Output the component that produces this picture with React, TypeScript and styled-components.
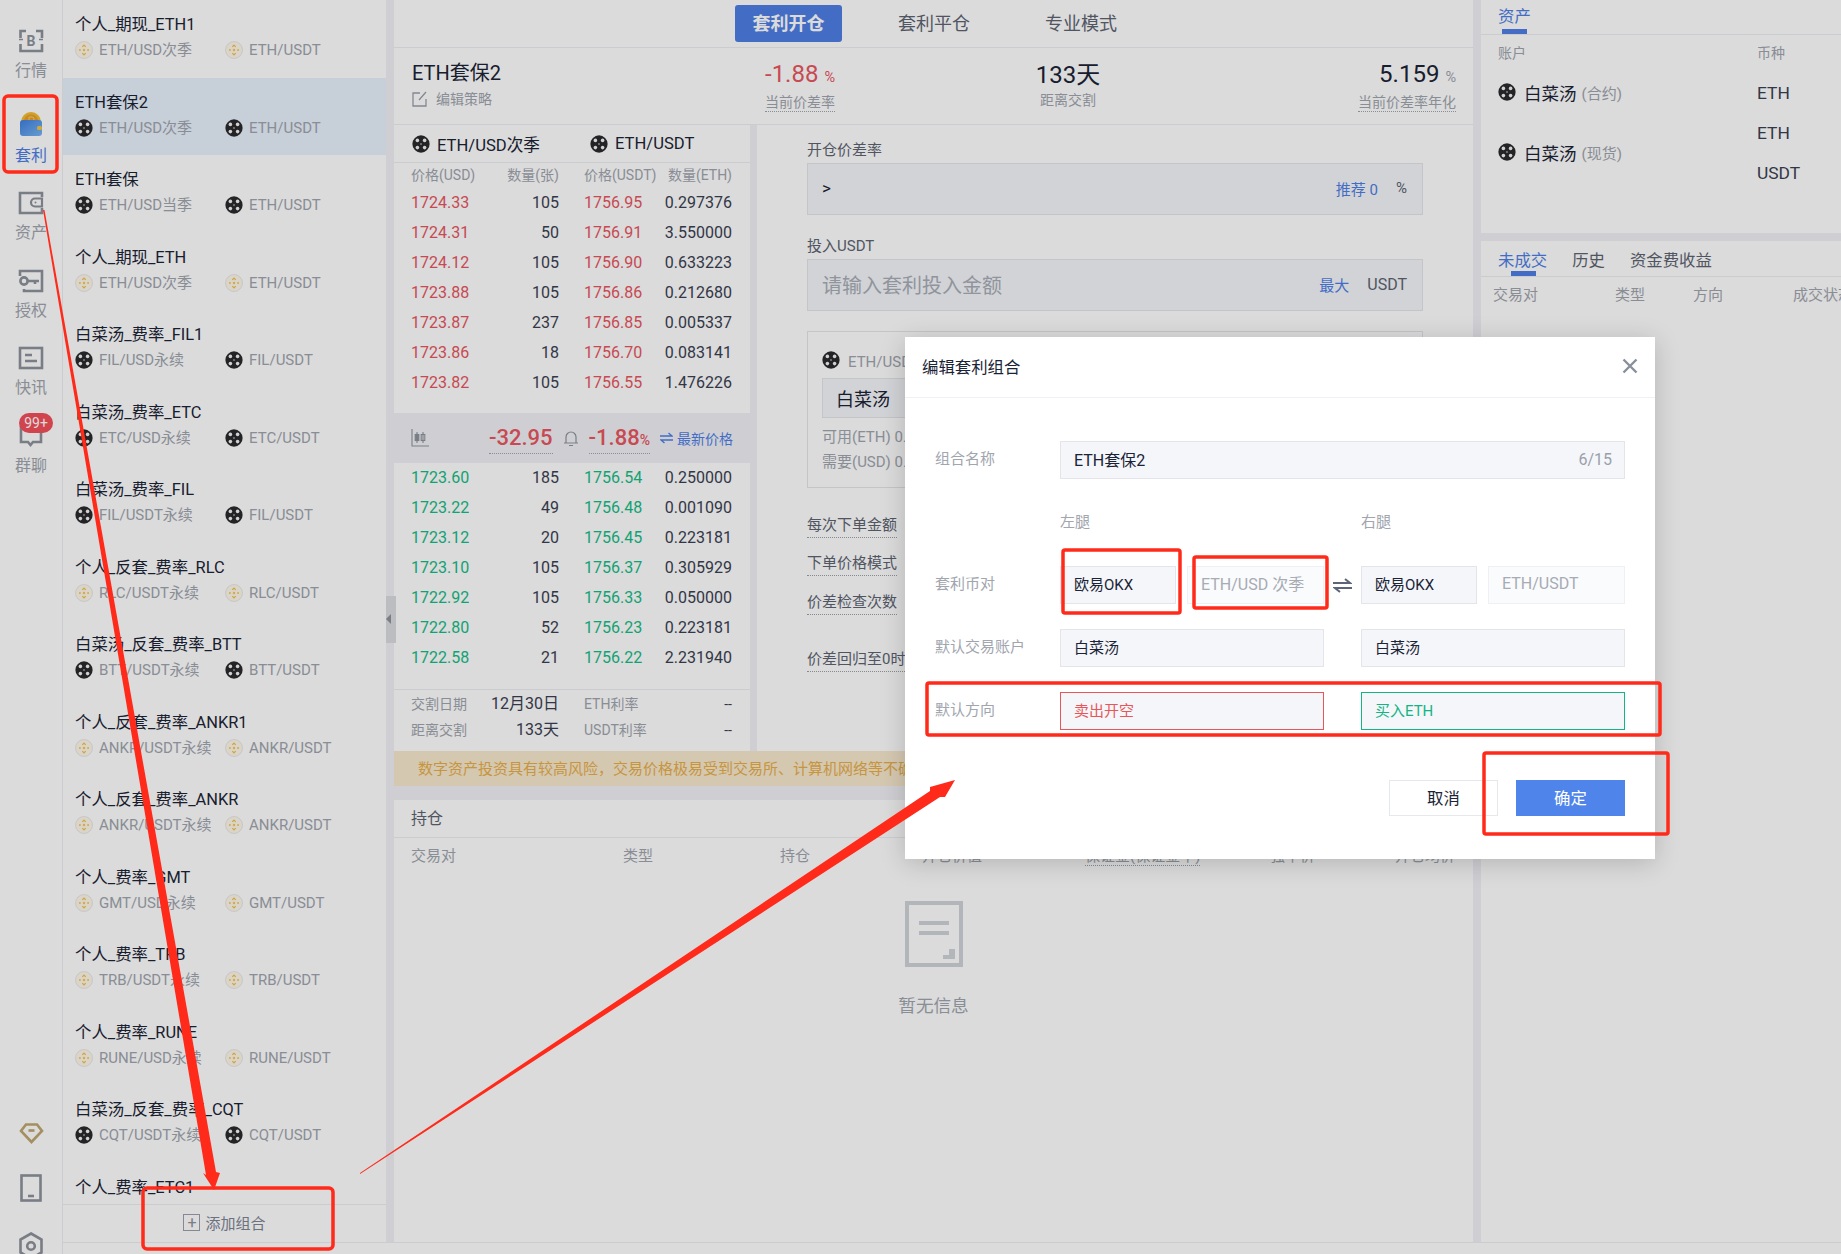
import React from 'react'
import styled, { createGlobalStyle } from 'styled-components'

const FONT = `Roboto, "Noto Sans CJK SC", "Noto Sans", sans-serif`
const BLUE = '#4f7fe6'
const RED = '#e9565f'
const GREEN = '#14bd87'
const INK = '#1b2436'
const NUM = '#3a4152'
const GREY = '#a0a5ae'

const GlobalStyle = createGlobalStyle`
  html, body { margin: 0; padding: 0; }
  body { font-family: ${FONT}; background: #fff; color: ${INK}; }
  * { box-sizing: border-box; }
`

type CoinKind = 'ok' | 'bn'

const Coin = ({ kind, size = 18 }: { kind: CoinKind; size?: number }) =>
  kind === 'ok' ? (
    <svg width={size} height={size} viewBox="0 0 20 20">
      <circle cx="10" cy="10" r="9.6" fill="#2b2b2e" />
      <circle cx="6" cy="6" r="2" fill="#f4f4f4" />
      <circle cx="14" cy="6" r="2" fill="#f4f4f4" />
      <circle cx="6" cy="14" r="2" fill="#f4f4f4" />
      <circle cx="14" cy="14" r="2" fill="#f4f4f4" />
      <circle cx="10" cy="10" r="0.8" fill="#f4f4f4" />
    </svg>
  ) : (
    <svg width={size} height={size} viewBox="0 0 20 20">
      <circle cx="10" cy="10" r="9.4" fill="#fff9ea" stroke="#e4e4e4" />
      <path
        d="M10 3.6l2.4 2.4-1 1L10 5.6 8.6 7l-1-1zM5.6 8.6l1 1.4-1 1.4-1.4-1.4zM14.4 8.6l1.4 1.4-1.4 1.4-1-1.4zM10 8.4l1.6 1.6-1.6 1.6L8.4 10zM7.6 14l1-1 1.4 1.4 1.4-1.4 1 1-2.4 2.4z"
        fill="#efc14f"
      />
    </svg>
  )

const strokeIcon = { fill: 'none', stroke: '#8d939c', strokeWidth: 2.6 }

const MarketIcon = () => (
  <svg width="26" height="26" viewBox="0 0 26 26" {...strokeIcon}>
    <path d="M8 3H2.5v7M2.5 16v7H24v-7M24 10V3H18" />
    <path d="M1 11.5h4M21 11.5h4" strokeWidth="1.6" />
    <text x="13" y="18" textAnchor="middle" fontSize="14" fontWeight="700" fill="#8d939c" stroke="none" fontFamily="Roboto, sans-serif">
      B
    </text>
  </svg>
)

const ArbIcon = () => (
  <svg width="24" height="24" viewBox="0 0 24 24">
    <defs>
      <linearGradient id="walletFill" x1="0" y1="0" x2="1" y2="1">
        <stop offset="0" stopColor="#3f7fe0" />
        <stop offset="1" stopColor="#78b6f2" />
      </linearGradient>
    </defs>
    <circle cx="12" cy="10" r="10" fill="#f4bd2c" />
    <circle cx="12" cy="10" r="7.4" fill="#ea9f2f" />
    <path d="M10 5v8M10 5h3a2 2 0 010 4h-3M10 9h3.5a2 2 0 010 4H10" fill="none" stroke="#f8d465" strokeWidth="1" />
    <rect x="1" y="8" width="22" height="16" rx="3" fill="url(#walletFill)" />
    <rect x="18" y="14" width="5" height="4" rx="1.5" fill="#f2c54a" />
  </svg>
)

const WalletIcon = () => (
  <svg width="26" height="24" viewBox="0 0 26 24" {...strokeIcon}>
    <path d="M24 6V2H2v20h22v-5" />
    <path d="M24 7.5h-7a4 4 0 000 8h7z" strokeWidth="2.2" />
    <circle cx="17.5" cy="11.5" r="1" fill="#8d939c" stroke="none" />
  </svg>
)

const KeyIcon = () => (
  <svg width="26" height="24" viewBox="0 0 26 24" {...strokeIcon}>
    <path d="M2 7V2h22v20H6v-2" />
    <circle cx="6" cy="12" r="3.6" />
    <path d="M10 12h11M17 12v3" />
  </svg>
)

const NewsIcon = () => (
  <svg width="26" height="24" viewBox="0 0 26 24" {...strokeIcon}>
    <rect x="2" y="2" width="22" height="20" />
    <path d="M7 9h7M7 15h12" />
  </svg>
)

const ChatIcon = () => (
  <svg width="26" height="24" viewBox="0 0 26 24" {...strokeIcon}>
    <path d="M3 3h20v15H15l-2.5 3-2.5-3H3z" />
  </svg>
)

const DiamondIcon = () => (
  <svg width="25" height="21" viewBox="0 0 25 21" fill="none" stroke="#bfa76f" strokeWidth="2.6">
    <path d="M7 1.5h11l5 6.5-10.5 11L2 8z" />
    <path d="M9.5 7.5h6" />
  </svg>
)

const TabletIcon = () => (
  <svg width="22" height="28" viewBox="0 0 22 28" {...strokeIcon}>
    <rect x="1.5" y="1.5" width="19" height="25" />
    <path d="M8 22h6" />
  </svg>
)

const GearIcon = () => (
  <svg width="24" height="28" viewBox="0 0 24 28" {...strokeIcon}>
    <path d="M12 1.5l10.5 6v13L12 26.5 1.5 20.5v-13z" />
    <circle cx="12" cy="14" r="3.8" />
  </svg>
)

const NAV: { label: string; icon: React.ReactNode; active?: boolean; badge?: string }[] = [
  { label: '行情', icon: <MarketIcon /> },
  { label: '套利', icon: <ArbIcon />, active: true },
  { label: '资产', icon: <WalletIcon /> },
  { label: '授权', icon: <KeyIcon /> },
  { label: '快讯', icon: <NewsIcon /> },
  { label: '群聊', icon: <ChatIcon />, badge: '99+' },
]

const COMBOS: { name: string; kind: CoinKind; left?: string; right?: string; active?: boolean }[] = [
  { name: '个人_期现_ETH1', kind: 'bn', left: 'ETH/USD次季', right: 'ETH/USDT' },
  { name: 'ETH套保2', kind: 'ok', left: 'ETH/USD次季', right: 'ETH/USDT', active: true },
  { name: 'ETH套保', kind: 'ok', left: 'ETH/USD当季', right: 'ETH/USDT' },
  { name: '个人_期现_ETH', kind: 'bn', left: 'ETH/USD次季', right: 'ETH/USDT' },
  { name: '白菜汤_费率_FIL1', kind: 'ok', left: 'FIL/USD永续', right: 'FIL/USDT' },
  { name: '白菜汤_费率_ETC', kind: 'ok', left: 'ETC/USD永续', right: 'ETC/USDT' },
  { name: '白菜汤_费率_FIL', kind: 'ok', left: 'FIL/USDT永续', right: 'FIL/USDT' },
  { name: '个人_反套_费率_RLC', kind: 'bn', left: 'RLC/USDT永续', right: 'RLC/USDT' },
  { name: '白菜汤_反套_费率_BTT', kind: 'ok', left: 'BTT/USDT永续', right: 'BTT/USDT' },
  { name: '个人_反套_费率_ANKR1', kind: 'bn', left: 'ANKR/USDT永续', right: 'ANKR/USDT' },
  { name: '个人_反套_费率_ANKR', kind: 'bn', left: 'ANKR/USDT永续', right: 'ANKR/USDT' },
  { name: '个人_费率_GMT', kind: 'bn', left: 'GMT/USD永续', right: 'GMT/USDT' },
  { name: '个人_费率_TRB', kind: 'bn', left: 'TRB/USDT永续', right: 'TRB/USDT' },
  { name: '个人_费率_RUNE', kind: 'bn', left: 'RUNE/USD永续', right: 'RUNE/USDT' },
  { name: '白菜汤_反套_费率_CQT', kind: 'ok', left: 'CQT/USDT永续', right: 'CQT/USDT' },
  { name: '个人_费率_ETC1', kind: 'bn' },
]

const ASKS = [
  ['1724.33', '105', '1756.95', '0.297376'],
  ['1724.31', '50', '1756.91', '3.550000'],
  ['1724.12', '105', '1756.90', '0.633223'],
  ['1723.88', '105', '1756.86', '0.212680'],
  ['1723.87', '237', '1756.85', '0.005337'],
  ['1723.86', '18', '1756.70', '0.083141'],
  ['1723.82', '105', '1756.55', '1.476226'],
]

const BIDS = [
  ['1723.60', '185', '1756.54', '0.250000'],
  ['1723.22', '49', '1756.48', '0.001090'],
  ['1723.12', '20', '1756.45', '0.223181'],
  ['1723.10', '105', '1756.37', '0.305929'],
  ['1722.92', '105', '1756.33', '0.050000'],
  ['1722.80', '52', '1756.23', '0.223181'],
  ['1722.58', '21', '1756.22', '2.231940'],
]

const POSITION_HEADS = [
  { label: '交易对', width: 212 },
  { label: '类型', width: 157 },
  { label: '持仓', width: 142 },
  { label: '开仓价值', width: 163 },
  { label: '保证金(保证金率)', width: 185, dotted: true },
  { label: '强平价', width: 125 },
  { label: '开仓均价', width: 66 },
]

const HINTS = [
  { label: '每次下单金额', top: 26 },
  { label: '下单价格模式', top: 14 },
  { label: '价差检查次数', top: 15 },
  { label: '价差回归至0时', top: 33 },
]

export default function App() {
  return (
    <Page>
      <GlobalStyle />
      <Rail>
        <Nav>
          {NAV.map((item) => (
            <NavItem key={item.label} $active={item.active}>
              <NavIcon $active={item.active}>
                {item.icon}
                {item.badge && <Badge>{item.badge}</Badge>}
              </NavIcon>
              {item.label}
            </NavItem>
          ))}
        </Nav>
        <RailBottom>
          <DiamondIcon />
          <TabletIcon />
          <GearIcon />
        </RailBottom>
      </Rail>
      <Body>
        <Columns>
          <ListColumn>
            <ComboList>
              {COMBOS.map((c) => (
                <ComboRow key={c.name} $active={c.active}>
                  <ComboName>{c.name}</ComboName>
                  {c.left && (
                    <ComboPairs>
                      <ComboPair>
                        <Coin kind={c.kind} />
                        {c.left}
                      </ComboPair>
                      <ComboPair>
                        <Coin kind={c.kind} />
                        {c.right}
                      </ComboPair>
                    </ComboPairs>
                  )}
                </ComboRow>
              ))}
            </ComboList>
            <AddBar>
              <PlusBox>+</PlusBox>
              添加组合
            </AddBar>
          </ListColumn>
          <Collapse />
          <Main>
            <TabBar>
              <MainTab $active>套利开仓</MainTab>
              <MainTab>套利平仓</MainTab>
              <MainTab>专业模式</MainTab>
            </TabBar>
            <Summary>
              <div>
                <SummaryName>ETH套保2</SummaryName>
                <EditLink>
                  <svg width="16" height="16" viewBox="0 0 16 16" fill="none" stroke="#9aa0a9" strokeWidth="1.3">
                    <path d="M8 2H1v13h13V8M7 9l7-8" />
                  </svg>
                  编辑策略
                </EditLink>
              </div>
              <Stat>
                <StatValue $color={RED}>
                  -1.88<StatUnit $color={RED}>%</StatUnit>
                </StatValue>
                <StatLabel $dotted>当前价差率</StatLabel>
              </Stat>
              <Stat $align="center">
                <StatValue>133天</StatValue>
                <StatLabel>距离交割</StatLabel>
              </Stat>
              <Stat $align="flex-end">
                <StatValue>
                  5.159<StatUnit>%</StatUnit>
                </StatValue>
                <StatLabel $dotted>当前价差率年化</StatLabel>
              </Stat>
            </Summary>
            <TradeRow>
              <Book>
                <BookPairs>
                  <BookPair>
                    <Coin kind="ok" />
                    ETH/USD次季
                  </BookPair>
                  <BookPair>
                    <Coin kind="ok" />
                    ETH/USDT
                  </BookPair>
                </BookPairs>
                <BookHead>
                  <span>价格(USD)</span>
                  <span>数量(张)</span>
                  <span>价格(USDT)</span>
                  <span>数量(ETH)</span>
                </BookHead>
                <Asks>
                  {ASKS.map((r) => (
                    <BookRow key={r[0]} $color={RED}>
                      {r.map((v, i) => (
                        <span key={i}>{v}</span>
                      ))}
                    </BookRow>
                  ))}
                </Asks>
                <SpreadBand>
                  <svg width="18" height="18" viewBox="0 0 18 18" fill="none" stroke="#8d939c" strokeWidth="1.1">
                    <path d="M1 0v17h17M6 3v11M12 3v11" />
                    <rect x="4.2" y="5.5" width="3.6" height="6" fill="#8d939c" />
                    <rect x="10.2" y="5.5" width="3.6" height="6" />
                  </svg>
                  <SpreadValues>
                    <SpreadValue>-32.95</SpreadValue>
                    <svg width="18" height="18" viewBox="0 0 18 18" fill="none" stroke="#8d939c" strokeWidth="1.2">
                      <path d="M2 14h14M4 14V8a5 5 0 0110 0v6M7 16.5h4" />
                    </svg>
                    <SpreadValue>
                      -1.88<small>%</small>
                    </SpreadValue>
                  </SpreadValues>
                  <LatestPrice>
                    <svg width="13" height="12" viewBox="0 0 13 12" fill="none" stroke={BLUE} strokeWidth="1.4">
                      <path d="M0 4h12L8.5 1M13 8H1l3.5 3" />
                    </svg>
                    最新价格
                  </LatestPrice>
                </SpreadBand>
                <Bids>
                  {BIDS.map((r) => (
                    <BookRow key={r[0]} $color={GREEN}>
                      {r.map((v, i) => (
                        <span key={i}>{v}</span>
                      ))}
                    </BookRow>
                  ))}
                </Bids>
                <BookFooter>
                  <FooterRow>
                    <span>交割日期</span>
                    <span>12月30日</span>
                    <span>ETH利率</span>
                    <span>--</span>
                  </FooterRow>
                  <FooterRow>
                    <span>距离交割</span>
                    <span>133天</span>
                    <span>USDT利率</span>
                    <span>--</span>
                  </FooterRow>
                </BookFooter>
              </Book>
              <FormColumn>
                <FormLabel>开仓价差率</FormLabel>
                <BigInput>
                  <InputPrefix>&gt;</InputPrefix>
                  <InputAction>推荐 0</InputAction>
                  <InputUnit $size={15}>%</InputUnit>
                </BigInput>
                <FormLabel $top={21}>投入USDT</FormLabel>
                <BigInput>
                  <Placeholder>请输入套利投入金额</Placeholder>
                  <InputAction>最大</InputAction>
                  <InputUnit $size={16}>USDT</InputUnit>
                </BigInput>
                <LegBox>
                  <LegPair>
                    <Coin kind="ok" />
                    ETH/USD次季
                  </LegPair>
                  <LegSelect>白菜汤</LegSelect>
                  <LegInfo>可用(ETH) 0.00</LegInfo>
                  <LegInfo>需要(USD) 0.00</LegInfo>
                </LegBox>
                {HINTS.map((h) => (
                  <HintLabel key={h.label} $top={h.top}>
                    {h.label}
                  </HintLabel>
                ))}
              </FormColumn>
            </TradeRow>
            <RiskBanner>
              数字资产投资具有较高风险，交易价格极易受到交易所、计算机网络等不确定因素影响，请谨慎参与
            </RiskBanner>
            <Positions>
              <PositionsTitle>持仓</PositionsTitle>
              <PositionsHead>
                {POSITION_HEADS.map((h) => (
                  <PositionCell key={h.label} $width={h.width} $dotted={h.dotted}>
                    <span>{h.label}</span>
                  </PositionCell>
                ))}
              </PositionsHead>
              <Empty>
                <svg width="58" height="66" viewBox="0 0 58 66" fill="none" stroke="#d0d4da" strokeWidth="4">
                  <path d="M2 2h54v62H2z" />
                  <path d="M14 22h30M14 32h30" strokeWidth="4" />
                  <path d="M38 54h6v-6h6v10H38z" fill="#d0d4da" stroke="none" />
                </svg>
                <EmptyText>暂无信息</EmptyText>
              </Empty>
            </Positions>
          </Main>
          <Side>
            <SidePanel>
              <SideTabs>
                <SideTab $active>资产</SideTab>
              </SideTabs>
              <AssetHead>
                <span>账户</span>
                <span>币种</span>
              </AssetHead>
              <AssetGroup>
                <AssetAccount>
                  <Coin kind="ok" />
                  白菜汤<small>(合约)</small>
                </AssetAccount>
                <AssetCoins>
                  <AssetCoin>ETH</AssetCoin>
                </AssetCoins>
              </AssetGroup>
              <AssetGroup>
                <AssetAccount>
                  <Coin kind="ok" />
                  白菜汤<small>(现货)</small>
                </AssetAccount>
                <AssetCoins>
                  <AssetCoin>ETH</AssetCoin>
                  <AssetCoin>USDT</AssetCoin>
                </AssetCoins>
              </AssetGroup>
            </SidePanel>
            <OrdersPanel>
              <SideTabs>
                <SideTab $active>未成交</SideTab>
                <SideTab>历史</SideTab>
                <SideTab>资金费收益</SideTab>
              </SideTabs>
              <OrdersHead>
                <OrderCell $width={122}>交易对</OrderCell>
                <OrderCell $width={78}>类型</OrderCell>
                <OrderCell $width={100}>方向</OrderCell>
                <OrderCell $width={80}>成交状态</OrderCell>
              </OrdersHead>
            </OrdersPanel>
          </Side>
        </Columns>
        <PageFoot />
      </Body>

      <Backdrop />
      <Dialog>
        <DialogHeader>
          编辑套利组合
          <svg width="16" height="16" viewBox="0 0 16 16" stroke="#8a909b" strokeWidth="2.4">
            <path d="M1.5 1.5l13 13M14.5 1.5l-13 13" />
          </svg>
        </DialogHeader>
        <DialogBody>
          <FormRow>
            <RowLabel>组合名称</RowLabel>
            <NameField>
              ETH套保2
              <FieldCount>6/15</FieldCount>
            </NameField>
          </FormRow>
          <LegTitles>
            <RowLabel />
            <LegTitle>左腿</LegTitle>
            <LegTitle>右腿</LegTitle>
          </LegTitles>
          <FormRow>
            <RowLabel>套利币对</RowLabel>
            <Legs>
              <PairFields>
                <Field>欧易OKX</Field>
                <Field $tone="ghost">ETH/USD 次季</Field>
              </PairFields>
              <SwapSlot>
                <svg width="19" height="15" viewBox="0 0 19 15" fill="none" stroke="#5d6678" strokeWidth="2">
                  <path d="M0 5h17L12 1M19 10H2l5 4" />
                </svg>
              </SwapSlot>
              <PairFields>
                <Field>欧易OKX</Field>
                <Field $tone="ghost">ETH/USDT</Field>
              </PairFields>
            </Legs>
          </FormRow>
          <FormRow $top={25}>
            <RowLabel>默认交易账户</RowLabel>
            <Legs>
              <Field>白菜汤</Field>
              <span />
              <Field>白菜汤</Field>
            </Legs>
          </FormRow>
          <FormRow $top={25}>
            <RowLabel>默认方向</RowLabel>
            <Legs>
              <Field $tone="sell">卖出开空</Field>
              <span />
              <Field $tone="buy">买入ETH</Field>
            </Legs>
          </FormRow>
          <DialogActions>
            <CancelButton>取消</CancelButton>
            <ConfirmButton>确定</ConfirmButton>
          </DialogActions>
        </DialogBody>
      </Dialog>

      <Annotations viewBox="0 0 1841 1254">
        <g fill="none" stroke="#ff2a1a" strokeWidth="3.5">
          <rect x="4" y="96" width="53" height="76" rx="4" />
          <rect x="1063" y="550" width="117" height="63" rx="2" />
          <rect x="1194" y="557" width="133" height="51" rx="2" />
          <rect x="927" y="683" width="733" height="52" rx="2" />
          <rect x="1484" y="753" width="184" height="81" rx="2" />
          <rect x="143" y="1188" width="190" height="61" rx="4" />
        </g>
        <g fill="#ff2a1a">
          <path d="M43 210L44.5 210L216 1172L220 1173L214 1190L203 1173L206 1175z" />
          <path d="M360 1173L930 791L930 787L955 780L945 797L940 797L360 1174z" />
        </g>
      </Annotations>
    </Page>
  )
}

const Page = styled.div`
  position: relative;
  display: flex;
  width: 1841px;
  height: 1254px;
  overflow: hidden;
  background: #fff;
  font-family: ${FONT};
`

const Rail = styled.aside`
  flex: none;
  display: flex;
  flex-direction: column;
  justify-content: space-between;
  width: 63px;
  height: 1254px;
  border-right: 1px solid #eceef2;
`

const Nav = styled.nav`
  display: flex;
  flex-direction: column;
  padding-top: 29px;
`

const NavItem = styled.div<{ $active?: boolean }>`
  display: flex;
  flex-direction: column;
  align-items: center;
  height: ${(p) => (p.$active ? '79.5px' : '77.5px')};
  margin-top: ${(p) => (p.$active ? '5px' : '0')};
  font-size: 16px;
  line-height: 16px;
  color: ${(p) => (p.$active ? BLUE : GREY)};
`

const NavIcon = styled.div<{ $active?: boolean }>`
  position: relative;
  display: flex;
  align-items: ${(p) => (p.$active ? 'flex-start' : 'center')};
  justify-content: center;
  width: 30px;
  height: ${(p) => (p.$active ? '36px' : '34px')};
  padding-bottom: ${(p) => (p.$active ? '0' : '10px')};
`

const Badge = styled.div`
  position: absolute;
  top: -11px;
  left: 3px;
  width: 34px;
  height: 20px;
  border-radius: 10px;
  background: #f5505a;
  color: #fff;
  font-size: 14px;
  line-height: 20px;
  text-align: center;
`

const RailBottom = styled.div`
  display: flex;
  flex-direction: column;
  align-items: center;
  gap: 30px;
  margin-bottom: -6px;
`

const Body = styled.div`
  flex: 1;
  display: flex;
  flex-direction: column;
  min-width: 0;
`

const Columns = styled.div`
  display: flex;
  height: 1242px;
  background: #f1f2f6;
`

const ListColumn = styled.div`
  flex: none;
  display: flex;
  flex-direction: column;
  width: 323px;
  margin-right: 8px;
  background: #fff;
`

const ComboList = styled.div`
  flex: 1;
  min-height: 0;
  overflow: hidden;
`

const ComboRow = styled.div<{ $active?: boolean }>`
  height: 77.5px;
  padding: 14px 0 0 12px;
  background: ${(p) => (p.$active ? '#e8f1fd' : 'transparent')};
`

const ComboName = styled.div`
  font-size: 16.4px;
  line-height: 22px;
  color: ${INK};
`

const ComboPairs = styled.div`
  display: flex;
  margin-top: 3px;
`

const ComboPair = styled.div`
  display: flex;
  align-items: center;
  gap: 6px;
  width: 150px;
  font-size: 15px;
  line-height: 22px;
  white-space: nowrap;
  color: ${GREY};
`

const AddBar = styled.div`
  flex: none;
  display: flex;
  align-items: center;
  justify-content: center;
  gap: 5px;
  height: 38px;
  padding-bottom: 2px;
  border-top: 1px solid #eceef2;
  font-size: 15px;
  color: #7d8494;
`

const PlusBox = styled.span`
  display: inline-flex;
  align-items: center;
  justify-content: center;
  width: 17px;
  height: 17px;
  border: 1px solid #9aa0aa;
  font-size: 16px;
  line-height: 1;
  color: #8d939c;
`

const Collapse = styled.div`
  position: absolute;
  left: 386px;
  top: 596px;
  width: 10px;
  height: 47px;
  background: #dadce1;
  z-index: 1;
  &::before {
    content: '';
    position: absolute;
    left: 0;
    top: 18px;
    border: 5px solid transparent;
    border-right-color: #8d939c;
    border-left-width: 0;
  }
`

const Main = styled.main`
  flex: none;
  display: flex;
  flex-direction: column;
  width: 1079px;
  margin-right: 8px;
`

const TabBar = styled.div`
  flex: none;
  display: flex;
  align-items: center;
  justify-content: center;
  gap: 37px;
  height: 48px;
  padding-left: 4px;
  background: #fff;
  border-bottom: 1px solid #eceef2;
`

const MainTab = styled.div<{ $active?: boolean }>`
  display: flex;
  align-items: center;
  justify-content: center;
  width: ${(p) => (p.$active ? '107px' : '110px')};
  height: 37px;
  padding-bottom: 3px;
  border-radius: 3px;
  font-size: 18px;
  font-weight: ${(p) => (p.$active ? 700 : 400)};
  color: ${(p) => (p.$active ? '#fff' : '#5d6472')};
  background: ${(p) => (p.$active ? BLUE : 'transparent')};
`

const Summary = styled.div`
  flex: none;
  display: grid;
  grid-template-columns: 353px 200px 206px 1fr;
  align-items: center;
  height: 77px;
  padding: 0 17px 2px 18px;
  background: #fff;
  border-bottom: 1px solid #eceef2;
`

const SummaryName = styled.div`
  margin-top: -1px;
  font-size: 20px;
  line-height: 26px;
  color: ${INK};
`

const EditLink = styled.div`
  display: flex;
  align-items: center;
  gap: 8px;
  margin-top: 3px;
  font-size: 14px;
  line-height: 20px;
  color: ${GREY};
`

const Stat = styled.div<{ $align?: string }>`
  display: flex;
  flex-direction: column;
  align-items: ${(p) => p.$align ?? 'flex-start'};
`

const StatValue = styled.div<{ $color?: string }>`
  margin-top: 1px;
  font-size: 24px;
  line-height: 29px;
  color: ${(p) => p.$color ?? INK};
`

const StatUnit = styled.span<{ $color?: string }>`
  margin-left: 6px;
  font-size: 14.5px;
  color: ${(p) => p.$color ?? GREY};
`

const StatLabel = styled.div<{ $dotted?: boolean }>`
  margin-top: 1px;
  font-size: 14px;
  line-height: 18px;
  color: ${GREY};
  border-bottom: ${(p) => (p.$dotted ? `1px dotted ${GREY}` : '1px solid transparent')};
`

const TradeRow = styled.div`
  flex: none;
  display: flex;
  gap: 7px;
  height: 626px;
`

const Book = styled.section`
  flex: none;
  width: 356px;
  background: #fff;
`

const BookPairs = styled.div`
  display: flex;
  align-items: center;
  height: 38px;
  padding-left: 18px;
  border-bottom: 1px solid #eceef2;
`

const BookPair = styled.div`
  flex: none;
  display: flex;
  align-items: center;
  gap: 7px;
  width: 178px;
  font-size: 16.6px;
  white-space: nowrap;
  color: ${INK};
`

const bookColumns = `
  display: grid;
  grid-template-columns: 74px 74px 25px 73px 75px;
  padding: 0 17px;
  white-space: nowrap;
  & > :nth-child(2), & > :nth-child(4) { text-align: right; }
  & > :nth-child(3) { grid-column: 4; }
`

const BookHead = styled.div`
  ${bookColumns}
  height: 25px;
  font-size: 14px;
  line-height: 24px;
  color: ${GREY};
`

const Asks = styled.div`
  padding-bottom: 15px;
`

const Bids = styled.div`
  padding-bottom: 16px;
  border-bottom: 1px solid #eceef2;
`

const BookRow = styled.div<{ $color: string }>`
  ${bookColumns}
  height: 30px;
  font-size: 16px;
  line-height: 30px;
  color: ${NUM};
  & > :nth-child(1), & > :nth-child(3) { color: ${(p) => p.$color}; }
`

const SpreadBand = styled.div`
  display: flex;
  align-items: center;
  height: 50px;
  padding: 0 17px;
  background: #f1f2f6;
`

const SpreadValues = styled.div`
  display: flex;
  align-items: center;
  gap: 9px;
  margin-left: auto;
`

const SpreadValue = styled.span`
  font-size: 22px;
  font-weight: 500;
  line-height: 30px;
  color: ${RED};
  border-bottom: 1px dotted ${GREY};
  small {
    font-size: 14px;
    line-height: 1;
  }
`

const LatestPrice = styled.span`
  display: flex;
  align-items: center;
  gap: 4px;
  margin-left: 10px;
  font-size: 14px;
  color: ${BLUE};
`

const BookFooter = styled.div`
  padding-top: 1px;
`

const FooterRow = styled.div`
  display: grid;
  grid-template-columns: 74px 74px 25px 73px 75px;
  height: 26px;
  padding: 0 17px;
  font-size: 14px;
  line-height: 26px;
  white-space: nowrap;
  color: ${GREY};
  & > :nth-child(2) { text-align: right; font-size: 16px; color: ${NUM}; }
  & > :nth-child(3) { grid-column: 4; }
  & > :nth-child(4) { text-align: right; color: ${NUM}; }
`

const FormColumn = styled.section`
  flex: 1;
  padding: 15px 50px 0;
  background: #fff;
`

const FormLabel = styled.div<{ $top?: number }>`
  margin-top: ${(p) => p.$top ?? 0}px;
  margin-bottom: 3px;
  font-size: 15px;
  line-height: 20px;
  color: #5d6472;
`

const BigInput = styled.div`
  display: flex;
  align-items: center;
  height: 52px;
  padding: 0 15px 2px 14px;
  background: #f4f6fa;
  border: 1px solid #e5e6ea;
  font-size: 15px;
`

const InputPrefix = styled.span`
  flex: 1;
  font-size: 17px;
  color: ${INK};
`

const Placeholder = styled.span`
  flex: 1;
  font-size: 20px;
  color: #a8adb6;
`

const InputAction = styled.span`
  color: ${BLUE};
`

const InputUnit = styled.span<{ $size: number }>`
  margin-left: 18px;
  font-size: ${(p) => p.$size}px;
  color: #5d6472;
`

const LegBox = styled.div`
  height: 157px;
  margin-top: 20px;
  padding: 17px 14px 0;
  border: 1px solid #e5e6ea;
`

const LegPair = styled.div`
  display: flex;
  align-items: center;
  gap: 8px;
  height: 22px;
  font-size: 15px;
  color: ${GREY};
`

const LegSelect = styled.div`
  display: flex;
  align-items: center;
  width: 250px;
  height: 40px;
  margin: 7px 0 7px;
  padding-left: 13px;
  border: 1px solid #e5e6ea;
  background: #f4f6fa;
  font-size: 18px;
  color: ${INK};
`

const LegInfo = styled.div`
  font-size: 15px;
  line-height: 25px;
  color: ${GREY};
`

const HintLabel = styled.div<{ $top: number }>`
  width: max-content;
  margin-top: ${(p) => p.$top}px;
  font-size: 15px;
  line-height: 23px;
  color: #5d6472;
  border-bottom: 1px dotted #9aa0aa;
`

const RiskBanner = styled.div`
  flex: none;
  display: flex;
  align-items: center;
  height: 35px;
  padding: 0 0 2px 24px;
  background: #f8e9cf;
  font-size: 15px;
  color: #e8ae49;
  white-space: nowrap;
  overflow: hidden;
`

const Positions = styled.section`
  flex: 1;
  margin-top: 14px;
  background: #fff;
`

const PositionsTitle = styled.div`
  height: 38px;
  padding-left: 17px;
  font-size: 16px;
  line-height: 37px;
  color: #5d6472;
  border-bottom: 1px solid #eceef2;
`

const PositionsHead = styled.div`
  display: flex;
  padding: 8px 0 0 17px;
  font-size: 15px;
  line-height: 20px;
  color: ${GREY};
`

const PositionCell = styled.div<{ $width: number; $dotted?: boolean }>`
  flex: none;
  width: ${(p) => p.$width}px;
  white-space: nowrap;
  span {
    border-bottom: ${(p) => (p.$dotted ? `1px dotted ${GREY}` : 'none')};
  }
`

const Empty = styled.div`
  display: flex;
  flex-direction: column;
  align-items: center;
  padding-top: 35px;
`

const EmptyText = styled.div`
  margin-top: 25px;
  font-size: 17.6px;
  color: ${GREY};
`

const Side = styled.aside`
  flex: 1;
  min-width: 0;
  display: flex;
  flex-direction: column;
  gap: 8px;
`

const SidePanel = styled.section`
  flex: none;
  height: 233px;
  background: #fff;
`

const OrdersPanel = styled.section`
  flex: 1;
  background: #fff;
`

const SideTabs = styled.div`
  display: flex;
  align-items: flex-end;
  gap: 25px;
  padding: 0 0 0 17px;
  border-bottom: 1px solid #eceef2;
  height: 35px;
  ${OrdersPanel} & {
    height: 36px;
  }
`

const SideTab = styled.div<{ $active?: boolean }>`
  position: relative;
  height: 30px;
  font-size: 16.4px;
  line-height: 25px;
  color: ${(p) => (p.$active ? BLUE : '#5d6472')};
  ${OrdersPanel} & {
    line-height: 29px;
  }
  &::after {
    content: '';
    display: ${(p) => (p.$active ? 'block' : 'none')};
    position: absolute;
    left: 50%;
    bottom: 0;
    width: 25px;
    height: 5px;
    margin-left: -12px;
    background: ${BLUE};
  }
`

const AssetHead = styled.div`
  display: grid;
  grid-template-columns: 259px 1fr;
  height: 37px;
  padding: 9px 0 0 17px;
  font-size: 14px;
  line-height: 18px;
  color: ${GREY};
`

const AssetGroup = styled.div`
  display: grid;
  grid-template-columns: 259px 1fr;
  align-items: center;
  padding-left: 17px;
`

const AssetAccount = styled.div`
  display: flex;
  align-items: center;
  gap: 8px;
  font-size: 17.5px;
  color: ${INK};
  small {
    margin-left: -3px;
    font-size: 15px;
    color: ${GREY};
  }
`

const AssetCoins = styled.div`
  display: flex;
  flex-direction: column;
`

const AssetCoin = styled.div`
  height: 40px;
  font-size: 17.4px;
  line-height: 43px;
  color: ${NUM};
`

const OrdersHead = styled.div`
  display: flex;
  padding: 8px 0 0 12px;
  font-size: 15px;
  line-height: 20px;
  color: ${GREY};
  white-space: nowrap;
`

const OrderCell = styled.div<{ $width: number }>`
  flex: none;
  width: ${(p) => p.$width}px;
`

const PageFoot = styled.div`
  flex: 1;
  border-top: 1px solid #eceef2;
`

const Backdrop = styled.div`
  position: absolute;
  inset: 0;
  background: rgba(0, 0, 0, 0.14);
  z-index: 2;
`

const Dialog = styled.div`
  position: absolute;
  left: 905px;
  top: 337px;
  width: 750px;
  height: 522px;
  background: #fff;
  box-shadow: 0 4px 24px rgba(0, 0, 0, 0.18);
  z-index: 3;
`

const DialogHeader = styled.div`
  display: flex;
  align-items: center;
  justify-content: space-between;
  height: 61px;
  padding: 0 17px 2px;
  border-bottom: 1px solid #f0f1f4;
  font-size: 16.4px;
  color: ${INK};
`

const DialogBody = styled.div`
  padding: 43px 30px 0;
`

const FormRow = styled.div<{ $top?: number }>`
  display: grid;
  grid-template-columns: 125px 1fr;
  align-items: center;
  margin-top: ${(p) => p.$top ?? 0}px;
`

const RowLabel = styled.div`
  padding-bottom: 6px;
  font-size: 15px;
  color: ${GREY};
  white-space: nowrap;
`

const LegTitles = styled.div`
  display: grid;
  grid-template-columns: 125px 301px 1fr;
  height: 20px;
  margin: 33px 0 34px;
`

const LegTitle = styled.div`
  font-size: 15px;
  line-height: 20px;
  color: ${GREY};
`

const Legs = styled.div`
  display: grid;
  grid-template-columns: 264px 37px 1fr;
`

const PairFields = styled.div`
  display: grid;
  grid-template-columns: 116px 1fr;
  gap: 11px;
`

const SwapSlot = styled.div`
  display: flex;
  align-items: center;
  justify-content: center;
`

const fieldTones = {
  plain: { bg: '#f4f6fa', border: '#e3e5ea', color: INK },
  ghost: { bg: '#fafbfc', border: '#eef0f3', color: '#a6abb4' },
  sell: { bg: '#f4f6fa', border: '#e8565b', color: '#e8565b' },
  buy: { bg: '#f4f6fa', border: '#14b585', color: '#14b585' },
}

const Field = styled.div<{ $tone?: keyof typeof fieldTones }>`
  display: flex;
  align-items: center;
  justify-content: space-between;
  height: 38px;
  padding: 0 12px 4px 13px;
  white-space: nowrap;
  font-size: ${(p) => (p.$tone === 'ghost' ? '16px' : '15px')};
  background: ${(p) => fieldTones[p.$tone ?? 'plain'].bg};
  border: 1px solid ${(p) => fieldTones[p.$tone ?? 'plain'].border};
  color: ${(p) => fieldTones[p.$tone ?? 'plain'].color};
`

const NameField = styled(Field)`
  padding-bottom: 2px;
  font-size: 16px;
`

const FieldCount = styled.span`
  color: #9aa0aa;
`

const DialogActions = styled.div`
  display: flex;
  justify-content: flex-end;
  gap: 18px;
  margin-top: 50px;
`

const CancelButton = styled.div`
  display: flex;
  align-items: center;
  justify-content: center;
  width: 109px;
  height: 36px;
  padding-bottom: 2px;
  border: 1px solid #e6e8ec;
  font-size: 16.4px;
  color: ${INK};
`

const ConfirmButton = styled.div`
  display: flex;
  align-items: center;
  justify-content: center;
  width: 109px;
  height: 36px;
  padding-bottom: 2px;
  background: #4f84ea;
  font-size: 16.4px;
  color: #fff;
`

const Annotations = styled.svg`
  position: absolute;
  left: 0;
  top: 0;
  width: 1841px;
  height: 1254px;
  pointer-events: none;
  z-index: 4;
`
